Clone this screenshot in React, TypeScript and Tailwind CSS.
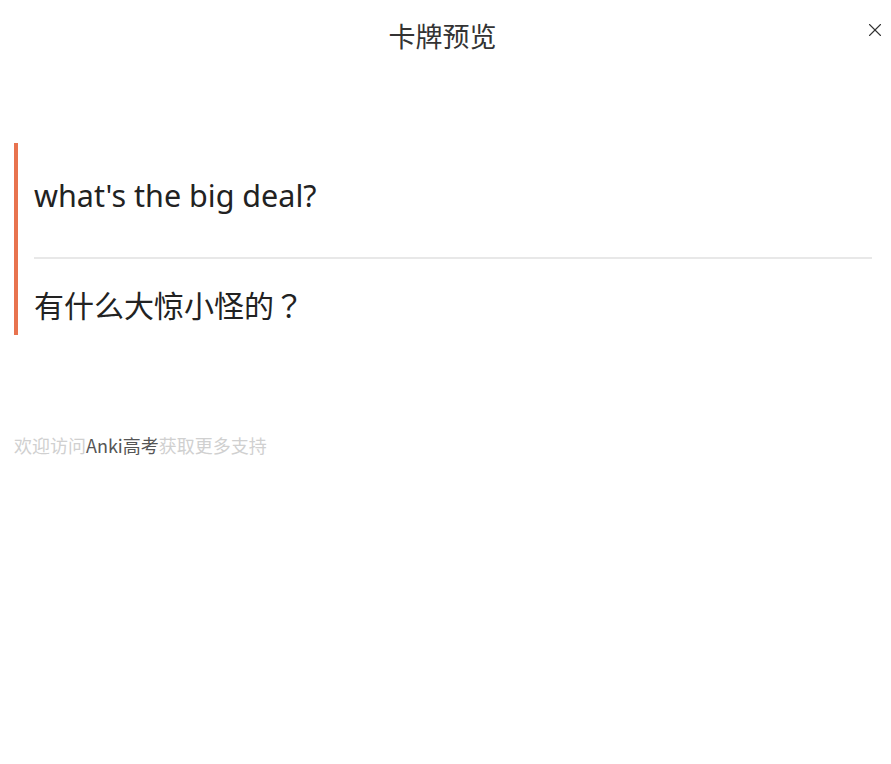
import { X } from "lucide-react";

const App = () => {
    return (
        <main className="w-[891px] h-[764px] bg-white text-[#222] font-['Noto_Sans','Noto_Sans_CJK_SC',sans-serif]">
            <header className="relative h-[72px] flex items-center justify-center">
                <h1 className="text-[27px] text-[#333] font-['Noto_Sans_CJK_SC',sans-serif] leading-none ml-[-6px] mt-[-2px]">卡牌预览</h1>
                <button className="absolute right-[5px] top-[19px] text-[#333]">
                    <X size={22} strokeWidth={1.2} />
                </button>
            </header>
            <section className="mt-[71px] ml-[14px] mr-[19px] border-l-4 border-[#e8734f] pl-[16px]">
                <div className="h-[116px] flex items-center border-b-2 border-[#e8e8e8]">
                    <p className="text-[30.5px] leading-none pb-[10px]">what's the big deal?</p>
                </div>
                <div className="h-[76px] flex items-center">
                    <p className="text-[30px] leading-none pt-[14px] font-['Noto_Sans_CJK_SC',sans-serif]">
                        有什么大惊小怪的<span className="font-['Noto_Sans_CJK_JP',sans-serif]">？</span>
                    </p>
                </div>
            </section>
            <footer className="mt-[97px] ml-[14px] text-[18px] text-[#d0d0d0] font-['Noto_Sans_CJK_SC',sans-serif]">
                欢迎访问<span className="text-[#555]">Anki高考</span>获取更多支持
            </footer>
        </main>
    );
};

export default App;
